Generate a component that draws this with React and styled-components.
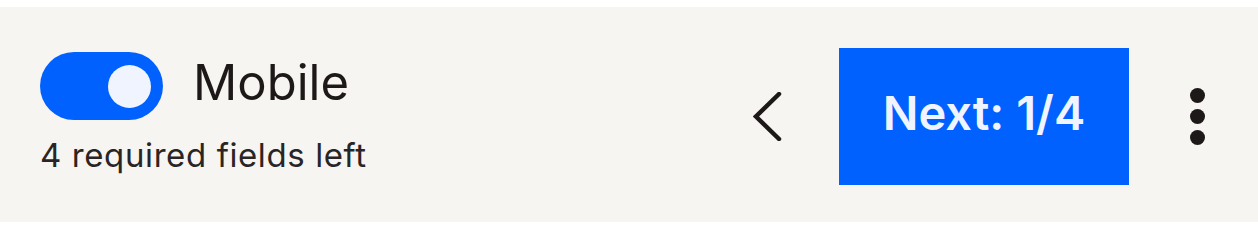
import React from "react";
import styled, { createGlobalStyle } from "styled-components";

const GlobalStyle = createGlobalStyle`
  body {
    margin: 0;
    background: #ffffff;
    font-family: Inter, "Liberation Sans", sans-serif;
    color: #1e1919;
  }
`;

const Bar = styled.div`
  margin-top: 7px;
  height: 215px;
  box-sizing: border-box;
  background: #f7f5f2;
  display: flex;
  justify-content: space-between;
  align-items: center;
  padding: 0 53px 0 40px;
`;

const Left = styled.div`
  align-self: flex-start;
  margin-top: 45px;
  display: flex;
  flex-direction: column;
`;

const ToggleRow = styled.div`
  display: flex;
  align-items: center;
  gap: 30px;
`;

const Switch = styled.button`
  width: 123px;
  height: 68px;
  border: none;
  border-radius: 34px;
  padding: 0 12px 0 0;
  background: ${(p) => (p.$on ? "#0061fe" : "#bbb5ae")};
  display: flex;
  align-items: center;
  justify-content: ${(p) => (p.$on ? "flex-end" : "flex-start")};
  cursor: pointer;
`;

const Knob = styled.span`
  width: 43px;
  height: 43px;
  border-radius: 50%;
  background: #f0f4fe;
`;

const Label = styled.span`
  font-size: 49px;
  line-height: 1;
  margin-bottom: 8px;
`;

const Hint = styled.div`
  margin-top: 15px;
  font-size: 33px;
  line-height: 40px;
  letter-spacing: 0.6px;
  color: #2a2525;
`;

const Right = styled.div`
  display: flex;
  align-items: center;
  margin-top: 4px;
`;

const IconButton = styled.button`
  background: none;
  border: none;
  padding: 0;
  display: flex;
  color: #1e1919;
  cursor: pointer;
`;

const NextButton = styled.button`
  width: 290px;
  height: 137px;
  margin: 0 61px 0 57px;
  padding: 0 0 8px;
  border: none;
  background: #0061fe;
  color: #f0f4fe;
  font-family: Inter, "Liberation Sans", sans-serif;
  font-size: 47px;
  font-weight: 600;
  cursor: pointer;
`;

export default function App() {
  return (
    <>
      <GlobalStyle />
      <Bar>
        <Left>
          <ToggleRow>
            <Switch $on>
              <Knob />
            </Switch>
            <Label>Mobile</Label>
          </ToggleRow>
          <Hint>4 required fields left</Hint>
        </Left>
        <Right>
          <IconButton aria-label="Previous">
            <svg width="29" height="49" viewBox="0 0 29 49" fill="none">
              <polyline
                points="26,2 3,24.5 26,47"
                stroke="currentColor"
                strokeWidth="4.5"
                strokeLinecap="round"
                strokeLinejoin="miter"
              />
            </svg>
          </IconButton>
          <NextButton>Next: 1/4</NextButton>
          <IconButton aria-label="More">
            <svg width="15" height="57" viewBox="0 0 15 57" fill="currentColor">
              <circle cx="7.5" cy="7.5" r="7.5" />
              <circle cx="7.5" cy="28.5" r="7.5" />
              <circle cx="7.5" cy="49.5" r="7.5" />
            </svg>
          </IconButton>
        </Right>
      </Bar>
    </>
  );
}
